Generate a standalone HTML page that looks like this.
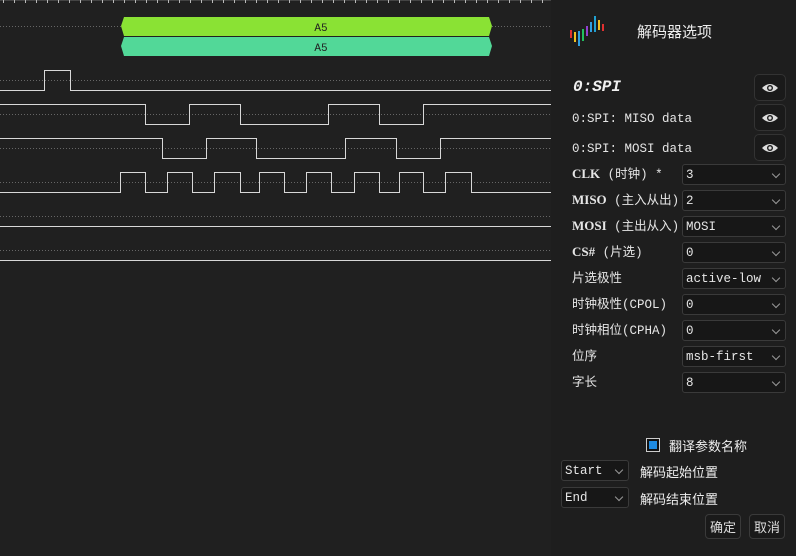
<!DOCTYPE html>
<html><head><meta charset="utf-8"><style>
body{margin:0;width:796px;height:556px;background:#202020;overflow:hidden;font-family:"Liberation Mono","Noto Sans CJK SC",monospace;color:#ddd;position:relative}
.p{position:absolute;left:551px;top:0;width:245px;height:556px;background:#1e1e1e}
.a{position:absolute}
.lbl{position:absolute;left:572px;font-size:12.5px;color:#e6e6e6;line-height:16px;white-space:nowrap}
.lbl b{font-family:"Liberation Serif","Noto Sans CJK SC",serif;font-weight:bold;font-size:13px}
.sel{position:absolute;left:682px;width:104px;height:21px;background:#171717;border:1px solid #3a3a3a;border-radius:3px;box-sizing:border-box;font-size:12.5px;color:#e6e6e6;padding-left:3px;line-height:20px}
.sel:after{content:"";position:absolute;right:6px;top:6px;width:5px;height:5px;border-right:1px solid #999;border-bottom:1px solid #999;transform:rotate(45deg)}
.eye{position:absolute;left:754px;width:32px;height:27px;background:#1a1a1a;border:1px solid #333;border-radius:5px;box-sizing:border-box}
.btn{position:absolute;top:514px;width:36px;height:25px;background:#1a1a1a;border:1px solid #3a3a3a;border-radius:4px;box-sizing:border-box;font-size:13px;text-align:center;line-height:23px;font-family:"Noto Sans CJK SC",sans-serif}
.cj{font-family:"Noto Sans CJK SC",sans-serif}
</style></head><body>
<svg class="a" style="left:0;top:0" width="551" height="556">
<g stroke="#aaa" stroke-width="1">
<path d="M0 0.5H551" stroke="#444"/>
</g>
<g stroke="#bbb">
<path id="t" d="M3.5 0V3M14.5 0V3M25.5 0V3M36.5 0V3M47.5 0V3M58.5 0V3M69.5 0V3M80.5 0V3M91.5 0V3M102.5 0V3M113.5 0V3M124.5 0V3M135.5 0V3M146.5 0V3M157.5 0V3M168.5 0V3M179.5 0V3M190.5 0V3M201.5 0V3M212.5 0V3M223.5 0V3M234.5 0V3M245.5 0V3M256.5 0V3M267.5 0V3M278.5 0V3M289.5 0V3M300.5 0V3M311.5 0V3M322.5 0V3M333.5 0V3M344.5 0V3M355.5 0V3M366.5 0V3M377.5 0V3M388.5 0V3M399.5 0V3M410.5 0V3M421.5 0V3M432.5 0V3M443.5 0V3M454.5 0V3M465.5 0V3M476.5 0V3M487.5 0V3M498.5 0V3M509.5 0V3M520.5 0V3M531.5 0V3M542.5 0V3"/>
</g>
<g stroke="#666" stroke-dasharray="1 2">
<path d="M0 26.5H121M492 26.5H551M0 80.5H551M0 114.5H551M0 148.5H551M0 182.5H551M0 216.5H551M0 250.5H551"/>
</g>
<path d="M124 17H489L492 26L489 36H124L121 26Z" fill="#8ae234"/>
<path d="M124 37H489L492 46L489 56H124L121 46Z" fill="#52d898"/>
<text x="321" y="31" font-size="11" text-anchor="middle" fill="#222" font-family="Liberation Mono">A5</text>
<text x="321" y="51" font-size="11" text-anchor="middle" fill="#222" font-family="Liberation Mono">A5</text>
<g fill="none" stroke="#d8d8d8" stroke-width="1">
<path d="M0 90.5H44.5V70.5H70.5V90.5H551"/>
<path d="M0 104.5H145.5V124.5H189.5V104.5H240.5V124.5H328.5V104.5H379.5V124.5H423.5V104.5H551"/>
<path d="M0 138.5H162.5V158.5H206.5V138.5H256.5V158.5H345.5V138.5H396.5V158.5H440.5V138.5H551"/>
<path d="M0 192.5H120.5V172.5H145.5V192.5H167.5V172.5H192.5V192.5H214.5V172.5H240.5V192.5H259.5V172.5H284.5V192.5H306.5V172.5H331.5V192.5H354.5V172.5H379.5V192.5H399.5V172.5H423.5V192.5H445.5V172.5H471.5V192.5H551"/>
<path d="M0 226.5H551M0 260.5H551"/>
</g>
</svg>
<div class="p"></div>
<svg class="a" style="left:568px;top:14px" width="42" height="34">
<g stroke-width="2">
<path d="M3 16V24" stroke="#e03030"/><path d="M7 18V28" stroke="#f0c020"/><path d="M11 17V32" stroke="#30a0e0"/><path d="M15 15V27" stroke="#20c060"/><path d="M19 12V22" stroke="#9040d0"/><path d="M23 8V18" stroke="#30a0e0"/><path d="M27 2V18" stroke="#20a0d0"/><path d="M31 6V16" stroke="#f0c020"/><path d="M35 10V17" stroke="#e03030"/>
</g></svg>
<div class="a cj" style="left:637px;top:21px;font-size:15px;color:#eee">解码器选项</div>
<div class="a" style="left:573px;top:78px;font-size:16px;font-style:italic;font-weight:bold;font-family:'Liberation Mono',monospace;color:#f0f0f0">0:SPI</div>
<div class="lbl" style="top:111px">0:SPI: MISO data</div>
<div class="lbl" style="top:141px">0:SPI: MOSI data</div>
<div class="eye" style="top:74px"></div><div class="eye" style="top:104px"></div><div class="eye" style="top:134px"></div>
<svg class="a" style="left:760px;top:80px" width="20" height="80"><g fill="#ddd">
<path d="M2 8Q10 0 18 8Q10 16 2 8Z"/><path d="M2 38Q10 30 18 38Q10 46 2 38Z"/><path d="M2 68Q10 60 18 68Q10 76 2 68Z"/></g>
<g fill="#1a1a1a"><circle cx="10" cy="8" r="3"/><circle cx="10" cy="38" r="3"/><circle cx="10" cy="68" r="3"/></g>
<g fill="#ddd"><circle cx="10" cy="8" r="1.6"/><circle cx="10" cy="38" r="1.6"/><circle cx="10" cy="68" r="1.6"/></g></svg>
<div class="lbl" style="top:166px"><b>CLK</b> (时钟) *</div>
<div class="lbl" style="top:192px"><b>MISO</b> (主入从出)</div>
<div class="lbl" style="top:218px"><b>MOSI</b> (主出从入)</div>
<div class="lbl" style="top:244px"><b>CS#</b> (片选)</div>
<div class="lbl" style="top:271px">片选极性</div>
<div class="lbl" style="top:297px">时钟极性(CPOL)</div>
<div class="lbl" style="top:323px">时钟相位(CPHA)</div>
<div class="lbl" style="top:349px">位序</div>
<div class="lbl" style="top:375px">字长</div>
<div class="sel" style="top:164px">3</div>
<div class="sel" style="top:190px">2</div>
<div class="sel" style="top:216px">MOSI</div>
<div class="sel" style="top:242px">0</div>
<div class="sel" style="top:268px">active-low</div>
<div class="sel" style="top:294px">0</div>
<div class="sel" style="top:320px">0</div>
<div class="sel" style="top:346px">msb-first</div>
<div class="sel" style="top:372px">8</div>
<div class="a" style="left:646px;top:438px;width:14px;height:14px;border:1px solid #ccc;box-sizing:border-box;background:#111"><div style="margin:2px;width:8px;height:8px;background:#1e8ae0"></div></div>
<div class="a cj" style="left:669px;top:436px;font-size:13px;color:#eee">翻译参数名称</div>
<div class="sel" style="left:561px;top:460px;width:68px">Start</div>
<div class="sel" style="left:561px;top:487px;width:68px">End</div>
<div class="a cj" style="left:640px;top:462px;font-size:13px;color:#eee">解码起始位置</div>
<div class="a cj" style="left:640px;top:489px;font-size:13px;color:#eee">解码结束位置</div>
<div class="btn" style="left:705px">确定</div>
<div class="btn" style="left:749px">取消</div>
</body></html>
